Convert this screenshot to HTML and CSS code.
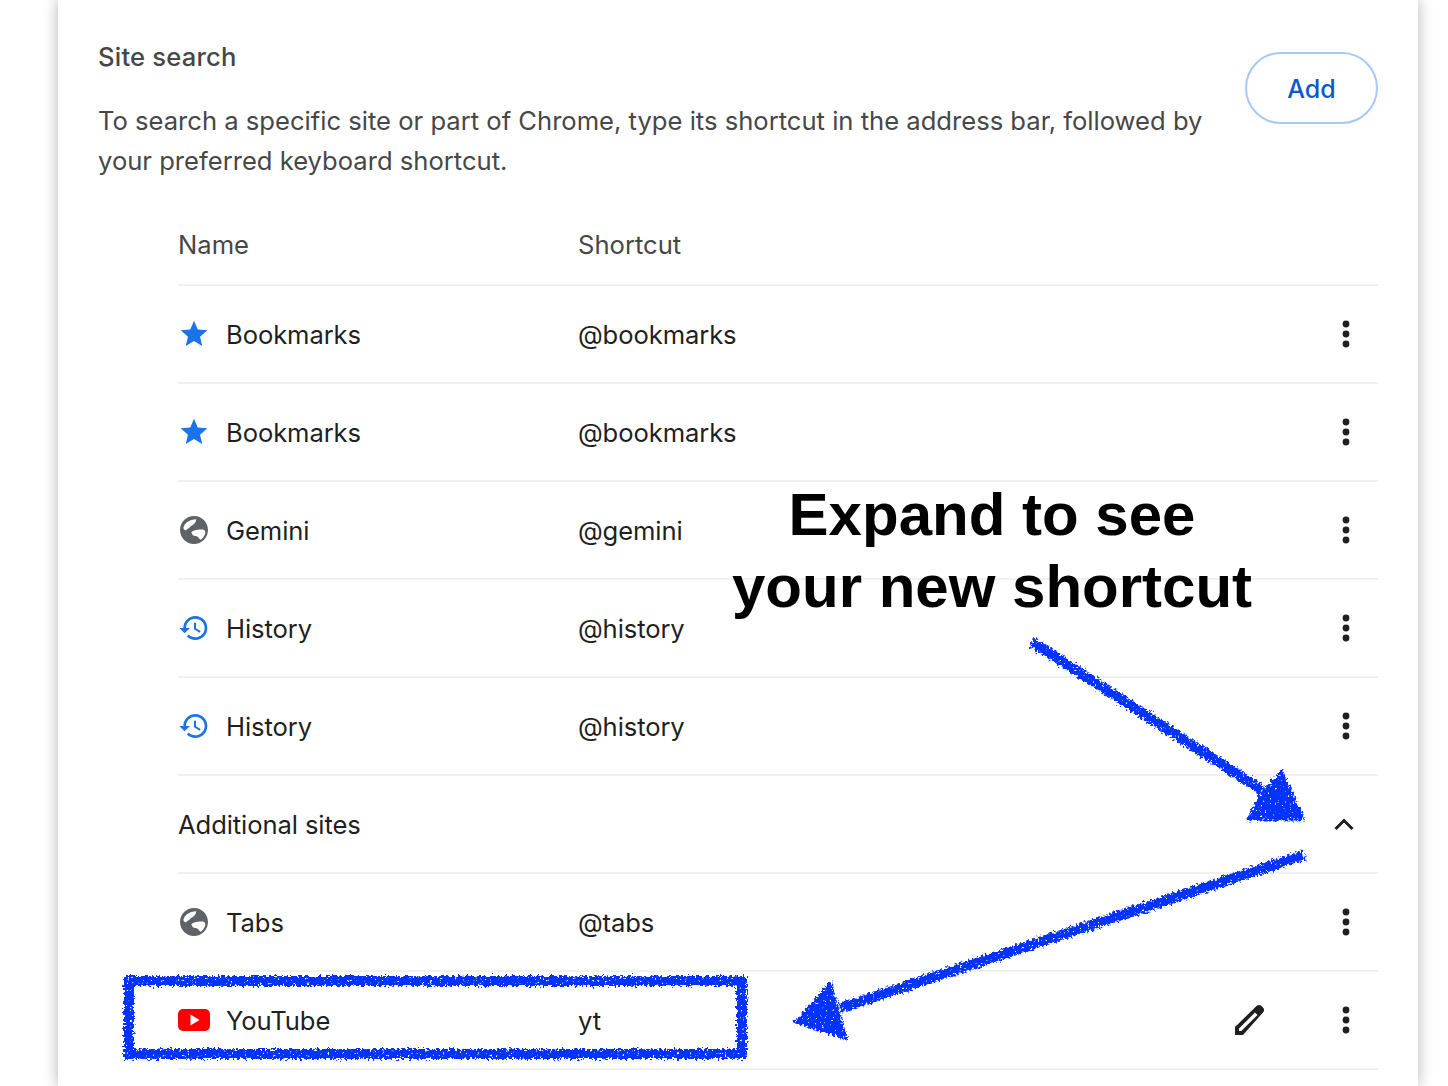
FILE: index.html
```html
<!doctype html>
<html>

<head>
    <meta charset="UTF-8">
    <title>Site search</title>
    <link rel="stylesheet" href="styles.css">
</head>

<body>
    <svg width="0" height="0" class="defs">
        <defs>
            <symbol id="i-star" viewBox="0 0 24 24"><path d="M12 17.270L18.180 21l-1.640-7.030L22 9.240l-7.190-.610L12 2 9.190 8.630 2 9.240l5.460 4.730L5.820 21z"/></symbol>
            <symbol id="i-globe" viewBox="0 0 24 24"><path fill-rule="evenodd" d="M12 1.500C6.200 1.500 1.500 6.200 1.500 12S6.200 22.500 12 22.500 22.500 17.800 22.500 12 17.800 1.500 12 1.500zM4 10.500C4.800 7 8.800 4 13.700 4 13.500 6 12.500 7.600 11 8.300 9.500 9 9 10 8 10.600 6.800 11.300 5.500 12.500 5.700 12.400 5 12 4.300 11.300 4 10.500zM10 13.700C11.200 12.500 13 11.800 14.700 11.800 16.500 11.800 18 11.600 19.300 11.800 20.200 12.300 20.600 13.300 20.500 14.200 19.900 16.400 18.800 18 17 19.400 15.800 18.500 15.500 17.500 14.700 17 13.800 16.400 12.800 16.700 12 16.400 11 16 10.400 14.900 10 13.700z"/></symbol>
            <symbol id="i-history" viewBox="0 0 24 24"><path d="M13 3c-4.970 0-9 4.030-9 9H1l3.890 3.890.07.140L9 12H6c0-3.870 3.130-7 7-7s7 3.130 7 7-3.130 7-7 7c-1.930 0-3.680-.790-4.940-2.060l-1.420 1.420C8.270 19.990 10.510 21 13 21c4.970 0 9-4.030 9-9s-4.030-9-9-9zm-1 5v5l4.280 2.540.720-1.210-3.500-2.080V8H12z"/></symbol>
            <symbol id="i-more" viewBox="0 0 32 32"><circle cx="16" cy="6" r="3.400"/><circle cx="16" cy="16" r="3.400"/><circle cx="16" cy="26" r="3.400"/></symbol>
        </defs>
    </svg>

    <main class="card">
        <section class="intro">
            <div class="intro-text">
                <h2>Site search</h2>
                <p>To search a specific site or part of Chrome, type its shortcut in the address bar, followed by your preferred keyboard shortcut.</p>
            </div>
            <button class="add-btn">Add</button>
        </section>

        <div class="list">
            <div class="row head">
                <span class="name">Name</span>
                <span class="shortcut">Shortcut</span>
            </div>
            <div class="row">
                <span class="name"><svg class="ico blue"><use href="#i-star"/></svg>Bookmarks</span>
                <span class="shortcut">@bookmarks</span>
                <svg class="more"><use href="#i-more"/></svg>
            </div>
            <div class="row">
                <span class="name"><svg class="ico blue"><use href="#i-star"/></svg>Bookmarks</span>
                <span class="shortcut">@bookmarks</span>
                <svg class="more"><use href="#i-more"/></svg>
            </div>
            <div class="row">
                <span class="name"><svg class="ico grey"><use href="#i-globe"/></svg>Gemini</span>
                <span class="shortcut">@gemini</span>
                <svg class="more"><use href="#i-more"/></svg>
            </div>
            <div class="row">
                <span class="name"><svg class="ico blue"><use href="#i-history"/></svg>History</span>
                <span class="shortcut">@history</span>
                <svg class="more"><use href="#i-more"/></svg>
            </div>
            <div class="row">
                <span class="name"><svg class="ico blue"><use href="#i-history"/></svg>History</span>
                <span class="shortcut">@history</span>
                <svg class="more"><use href="#i-more"/></svg>
            </div>
            <div class="row">
                <span class="name">Additional sites</span>
                <svg class="more" viewBox="0 0 32 32"><path class="chevron" d="M5.500 21L14 12.500 22.500 21"/></svg>
            </div>
            <div class="row">
                <span class="name"><svg class="ico grey"><use href="#i-globe"/></svg>Tabs</span>
                <span class="shortcut">@tabs</span>
                <svg class="more"><use href="#i-more"/></svg>
            </div>
            <div class="row">
                <span class="name">
                    <svg class="ico" viewBox="0 0 32 32"><rect y="5" width="32" height="22" rx="5" fill="#f00"/><path d="M12.500 10.500L21.500 16l-9 5.500z" fill="#fff"/></svg>YouTube
                </span>
                <span class="shortcut">yt</span>
                <svg class="edit" viewBox="0 1 32 32"><path fill-rule="evenodd" d="M1 32V24L22.500 3c1.500-1.500 3.500-1.500 5 0l1.500 1.500c1.500 1.500 1.500 3.500 0 5L9 32zM5 28h2.300L23.500 12 21 9.500 5 25.500z"/></svg>
                <svg class="more"><use href="#i-more"/></svg>
            </div>
        </div>
    </main>

    <!-- 手绘标注，盖在列表上面 -->
    <div class="note">Expand to see<br>your new shortcut</div>
    <svg class="scribble" viewBox="0 0 1448 1086">
        <defs>
            <filter id="rough" x="-5%" y="-5%" width="110%" height="110%" color-interpolation-filters="sRGB">
                <feTurbulence type="fractalNoise" baseFrequency="0.4" numOctaves="2" seed="4" result="noise"/>
                <feDisplacementMap in="SourceGraphic" in2="noise" scale="8" xChannelSelector="R" yChannelSelector="G" result="moved"/>
                <feColorMatrix in="noise" type="matrix" values="0 0 0 0 0  0 0 0 0 0  0 0 0 0 0  9 0 0 0 -2" result="holes"/>
                <feComposite in="moved" in2="holes" operator="in"/>
            </filter>
        </defs>
        <g filter="url(#rough)">
            <path class="stroke" d="M1032 642L1262 790"/>
            <path class="fill" d="M1282 772L1303 819 1249 819 1262 793z"/>
            <path class="stroke" d="M1304 855L840 1008"/>
            <path class="fill" d="M830 984L846 1038 796 1022z"/>
            <rect class="box" x="129" y="981" width="613" height="73"/>
        </g>
    </svg>
</body>

</html>
```

FILE: styles.css
```css
html {
    --line: #f0f0f0;
    --text: #1f1f1f;
    --text-soft: #474747;
    --blue: #1a73e8;
    --pen: #0433ff;
}
body {
    margin: 0;
    height: 1086px;
    overflow: hidden;
    background-color: #fff;
    font-family: Inter, "Liberation Sans", sans-serif;
    font-size: 25.6px;
    letter-spacing: -0.1px;
    color: var(--text);
    position: relative;
}
.defs {
    position: absolute;
}
.card {
    box-sizing: border-box;
    width: 1360px;
    height: 1086px;
    margin-left: 58px;
    padding: 0 40px;
    background-color: #fff;
    box-shadow: 0 0 14px rgba(0, 0, 0, 0.3);
}

.intro {
    display: flex;
    justify-content: space-between;
    padding-top: 39px;
}
.intro-text {
    width: 1110px;
    color: var(--text-soft);
}
.intro-text h2 {
    margin: 0 0 26px 0;
    font-size: 25.6px;
    font-weight: 500;
    line-height: 36px;
    letter-spacing: 0.2px;
}
.intro-text p {
    margin: 0;
    line-height: 40px;
    letter-spacing: 0;
}
.add-btn {
    box-sizing: border-box;
    width: 133px;
    height: 72px;
    margin-top: 13px;
    padding-top: 3px;
    border: 2px solid #a8c7fa;
    border-radius: 36px;
    background: #fff;
    color: #0b57d0;
    font-family: Inter, "Liberation Sans", sans-serif;
    font-size: 25px;
    font-weight: 500;
}

.list {
    margin-left: 80px;
    margin-top: 25px;
}
.row {
    display: flex;
    align-items: center;
    box-sizing: border-box;
    height: 98px;
    border-bottom: 2px solid var(--line);
    padding-right: 16px;
}
.row.head {
    height: 80px;
    padding-bottom: 2px;
    color: var(--text-soft);
    letter-spacing: 0;
}
.name {
    display: flex;
    align-items: center;
    width: 400px;
    flex: none;
}
.ico {
    width: 32px;
    height: 32px;
    margin-right: 16px;
    flex: none;
}
.ico.blue {
    fill: var(--blue);
}
.ico.grey {
    fill: #5f6368;
}
.shortcut {
    flex: 1;
}
.more {
    width: 32px;
    height: 32px;
    margin-left: auto;
    fill: var(--text);
}
.chevron {
    fill: none;
    stroke: var(--text);
    stroke-width: 3;
}
.edit {
    width: 32px;
    height: 32px;
    margin-right: 64px;
    fill: var(--text);
}

.note {
    position: absolute;
    left: 692px;
    top: 479px;
    width: 600px;
    text-align: center;
    color: #000;
    font-family: "Liberation Sans", Arial, sans-serif;
    font-size: 60px;
    font-weight: 700;
    line-height: 72px;
    letter-spacing: 0;
}
.scribble {
    position: absolute;
    top: 0;
    left: 0;
    width: 1448px;
    height: 1086px;
}
.scribble .stroke {
    fill: none;
    stroke: var(--pen);
    stroke-width: 10;
}
.scribble .fill {
    fill: var(--pen);
    stroke: var(--pen);
    stroke-width: 3;
}
.scribble .box {
    fill: none;
    stroke: var(--pen);
    stroke-width: 10;
}
```
